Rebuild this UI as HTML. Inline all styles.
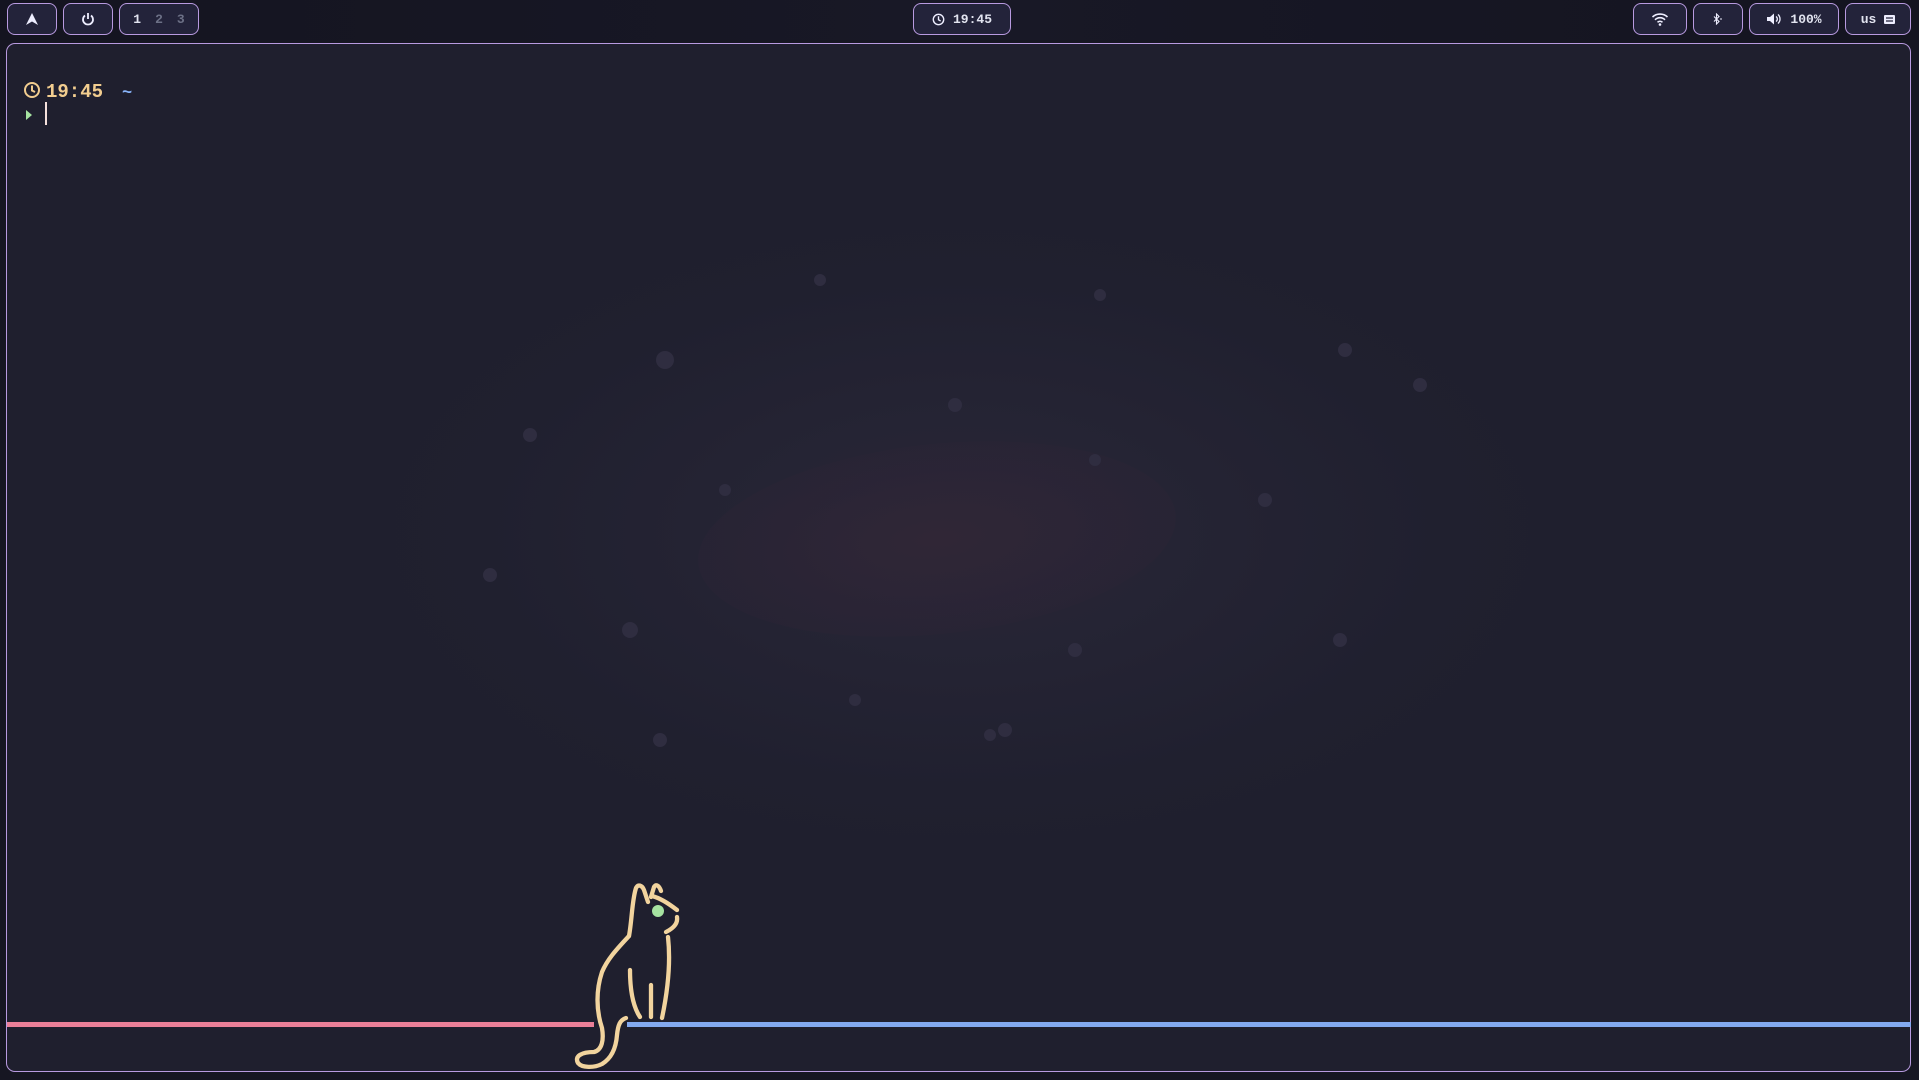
<!DOCTYPE html>
<html><head><meta charset="utf-8"><style>
*{margin:0;padding:0;box-sizing:border-box}
body{width:1919px;height:1080px;overflow:hidden;background:#161622;font-family:"Liberation Mono","DejaVu Sans Mono",monospace;position:relative}
.bar{position:absolute;left:0;top:0;width:1919px;height:40px;background:linear-gradient(90deg,#141420,#181826 50%,#141420)}
.b{position:absolute;top:3px;height:32px;border:1.6px solid #b89ae0;border-radius:8px;background:#23233a;color:#e2e4f0;font-weight:bold;font-size:13px;display:flex;align-items:center;justify-content:center;gap:8px}
.term{position:absolute;left:6px;top:43px;width:1905px;height:1029px;border:1.5px solid #b89ae0;border-radius:9px;overflow:hidden;background:radial-gradient(ellipse 600px 320px at 955px 490px,#292736 0%,#242333 45%,#20202f 80%,#1f1f2e 100%)}
.gal{position:absolute;left:690px;top:400px;width:480px;height:190px;border-radius:50%;background:radial-gradient(ellipse,#302636 0%,rgba(46,36,54,0.5) 50%,rgba(0,0,0,0) 100%);transform:rotate(-6deg)}
</style></head><body>
<div class="bar">
<div class="b" style="left:7px;width:50px"><svg width="14" height="14" viewBox="0 0 14 14"><path d="M7 1L13 13L7 9.5L1 13Z" fill="#eef"/></svg></div>
<div class="b" style="left:63px;width:50px"><svg width="14" height="14" viewBox="0 0 14 14"><path d="M4 3.5A5 5 0 1 0 10 3.5" stroke="#eef" stroke-width="1.8" fill="none"/><path d="M7 1V7" stroke="#eef" stroke-width="1.8"/></svg></div>
<div class="b" style="left:119px;width:80px;gap:14px"><span>1</span><span style="color:#6c7086">2</span><span style="color:#6c7086">3</span></div>
<div class="b" style="left:913px;width:98px"><svg width="13" height="13" viewBox="0 0 14 14"><circle cx="7" cy="7" r="5.6" stroke="#eef" stroke-width="1.5" fill="none"/><path d="M7 3.5V7.3L9.3 8.6" stroke="#eef" stroke-width="1.5" fill="none"/></svg><span>19:45</span></div>
<div class="b" style="left:1633px;width:54px"><svg width="18" height="14" viewBox="0 0 18 14"><path d="M1.5 5A11 11 0 0 1 16.5 5M4 7.8A7 7 0 0 1 14 7.8M6.5 10.3A3.5 3.5 0 0 1 11.5 10.3" stroke="#eef" stroke-width="1.6" fill="none"/><circle cx="9" cy="12.5" r="1.3" fill="#eef"/></svg></div>
<div class="b" style="left:1693px;width:50px"><svg width="12" height="12" viewBox="0 0 12 12"><path d="M2 3.5L7 8.5L4.5 11V1L7 3.5L2 8.5" stroke="#eef" stroke-width="1.1" fill="none"/><path d="M9 5V7" stroke="#eef" stroke-width="1"/></svg></div>
<div class="b" style="left:1749px;width:90px"><svg width="16" height="14" viewBox="0 0 16 14"><path d="M1 5H4L8 1.5V12.5L4 9H1Z" fill="#eef"/><path d="M10 4.5A3 3 0 0 1 10 9.5M12 2.5A6 6 0 0 1 12 11.5" stroke="#eef" stroke-width="1.3" fill="none"/></svg><span>100%</span></div>
<div class="b" style="left:1845px;width:66px"><span>us</span><svg width="11" height="9" viewBox="0 0 11 9"><rect x="0" y="0" width="11" height="9" rx="1" fill="#eef"/><path d="M2 3H9M2 6H9" stroke="#23233a" stroke-width="1.2"/></svg></div>
</div>
<div class="term">
<div class="gal"></div>
</div>
<svg style="position:absolute;left:0;top:0" width="1919" height="1080">
<g fill="#2f2d40">
<circle cx="665" cy="360" r="9"/><circle cx="530" cy="435" r="7"/><circle cx="490" cy="575" r="7"/><circle cx="630" cy="630" r="8"/><circle cx="660" cy="740" r="7"/><circle cx="855" cy="700" r="6"/><circle cx="1005" cy="730" r="7"/><circle cx="1075" cy="650" r="7"/><circle cx="1265" cy="500" r="7"/><circle cx="1340" cy="640" r="7"/><circle cx="1345" cy="350" r="7"/><circle cx="1420" cy="385" r="7"/><circle cx="955" cy="405" r="7"/><circle cx="1095" cy="460" r="6"/><circle cx="820" cy="280" r="6"/><circle cx="1100" cy="295" r="6"/><circle cx="990" cy="735" r="6"/><circle cx="725" cy="490" r="6"/>
</g>
<circle cx="32" cy="90" r="7" stroke="#f2cd8f" stroke-width="2" fill="none"/><path d="M32 85.5V90.5L35 92" stroke="#f2cd8f" stroke-width="2" fill="none"/>
<text x="46" y="97" fill="#f2cd8f" font-family="Liberation Mono,monospace" font-size="19" font-weight="bold">19:45</text>
<text x="122" y="97" fill="#89b4fa" font-family="Liberation Mono,monospace" font-size="17" font-weight="bold">~</text>
<path d="M26 110L32 115L26 120Z" fill="#a6e3a1"/>
<rect x="45" y="102" width="2" height="23" fill="#f5e0dc"/>
<line x1="7" y1="1024.5" x2="594" y2="1024.5" stroke="#ea7f98" stroke-width="5"/>
<line x1="627" y1="1024.5" x2="1911" y2="1024.5" stroke="#83a9ef" stroke-width="5"/>
<g transform="translate(560,860)" stroke="#f2d49e" stroke-width="4.3" fill="none" stroke-linecap="round" stroke-linejoin="round">
<path d="M69 76C72 60 72 40 76 28C78 24 82 25 84 30L88 42"/>
<path d="M91 37L94 27C96 24 99 25 101 31"/>
<path d="M92 36C100 38 108 43 117 50"/>
<path d="M117 57C118 63 114 68 106 72"/>
<path d="M108 77C110 95 110 120 102 158"/>
<path d="M69 76C58 88 48 98 42 112C36 130 36 150 42 168C44 180 42 190 34 192C22 192 14 196 18 203C22 208 34 208 42 204C52 198 56 188 57 175C58 165 60 160 66 158"/>
<path d="M70 110C70 128 72 145 80 157"/>
<path d="M91 125V157"/>
</g>
<circle cx="658" cy="911" r="6" fill="#a6e3a1"/>
</svg>
</body></html>
